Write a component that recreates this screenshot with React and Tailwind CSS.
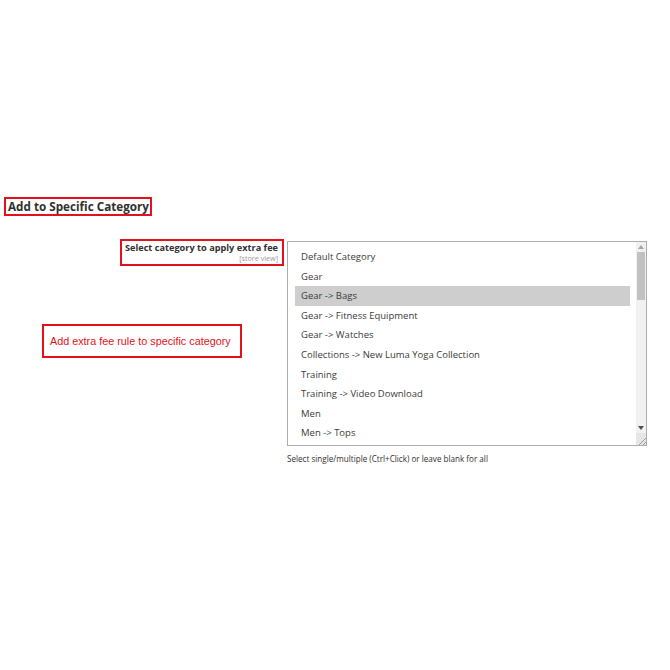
import React from "react";

const categories = [
  "Default Category",
  "Gear",
  "Gear -> Bags",
  "Gear -> Fitness Equipment",
  "Gear -> Watches",
  "Collections -> New Luma Yoga Collection",
  "Training",
  "Training -> Video Download",
  "Men",
  "Men -> Tops",
];

function Scrollbar() {
  return (
    <div className="flex flex-col w-[10px] bg-[#f1f1f1]">
      <div className="h-[10px] flex items-center justify-center">
        <svg width="6" height="4" viewBox="0 0 6 4">
          <path d="M0 4 L3 0 L6 4 Z" fill="#a3a3a3" />
        </svg>
      </div>
      <div className="h-[48px] bg-[#c1c1c1] mx-[1px]"></div>
      <div className="flex-1"></div>
      <div className="h-[10px] flex items-center justify-center">
        <svg width="6" height="4" viewBox="0 0 6 4">
          <path d="M0 0 L6 0 L3 4 Z" fill="#505050" />
        </svg>
      </div>
      <div className="h-[12px] flex items-end justify-end bg-[#e6e6e6]">
        <svg width="8" height="8" viewBox="0 0 8 8">
          <path d="M8 1 L1 8 M8 5 L5 8" stroke="#9a9a9a" strokeWidth="1" />
        </svg>
      </div>
    </div>
  );
}

export default function App() {
  return (
    <div className="w-[670px] h-[670px] bg-white pt-[197px] font-['Open_Sans',sans-serif] text-[#303030]">
      <div className="ml-[4px] w-[148px] h-[19px] flex items-center border-2 border-[#e3111b] pl-[2px] text-[11.7px] font-bold text-[#303030] whitespace-nowrap">
        Add to Specific Category
      </div>

      <div className="flex mt-[23px]">
        <div className="w-[287px] flex flex-col shrink-0">
          <div className="self-end mr-[3px] border-2 border-[#e3111b] w-[164px] h-[27px] pr-[4px] flex flex-col items-end">
            <span className="text-[9.2px] font-bold leading-[12px] mt-[1px] whitespace-nowrap">
              Select category to apply extra fee
            </span>
            <span className="text-[7.2px] leading-[9px] text-[#9a9a9a] whitespace-nowrap">[store view]</span>
          </div>
          <div className="ml-[42px] mt-[58px] w-[200px] h-[34px] border-2 border-[#e3111b] flex items-center pl-[6px]">
            <span className="font-['Liberation_Sans',Arial,sans-serif] text-[10.8px] text-[#e3111b] whitespace-nowrap">
              Add extra fee rule to specific category
            </span>
          </div>
        </div>

        <div className="flex flex-col mt-[2px]">
          <div className="w-[360px] h-[205px] border border-[#adadad] flex bg-white">
            <div className="flex-1 overflow-hidden pl-[7px] pr-[6px] pt-[5px]">
              {categories.map((c, i) => (
                <div
                  key={c}
                  className={
                    i === 2
                      ? "h-[19.6px] leading-[19.6px] pl-[6px] text-[9.5px] text-[#3a3a3a] bg-[#cecece] whitespace-nowrap"
                      : "h-[19.6px] leading-[19.6px] pl-[6px] text-[9.5px] text-[#3a3a3a] whitespace-nowrap"
                  }
                >
                  {c}
                </div>
              ))}
            </div>
            <Scrollbar />
          </div>
          <div className="text-[8.1px] text-[#303030] mt-[7px] leading-[12px] whitespace-nowrap">
            Select single/multiple (Ctrl+Click) or leave blank for all
          </div>
        </div>
      </div>
    </div>
  );
}
